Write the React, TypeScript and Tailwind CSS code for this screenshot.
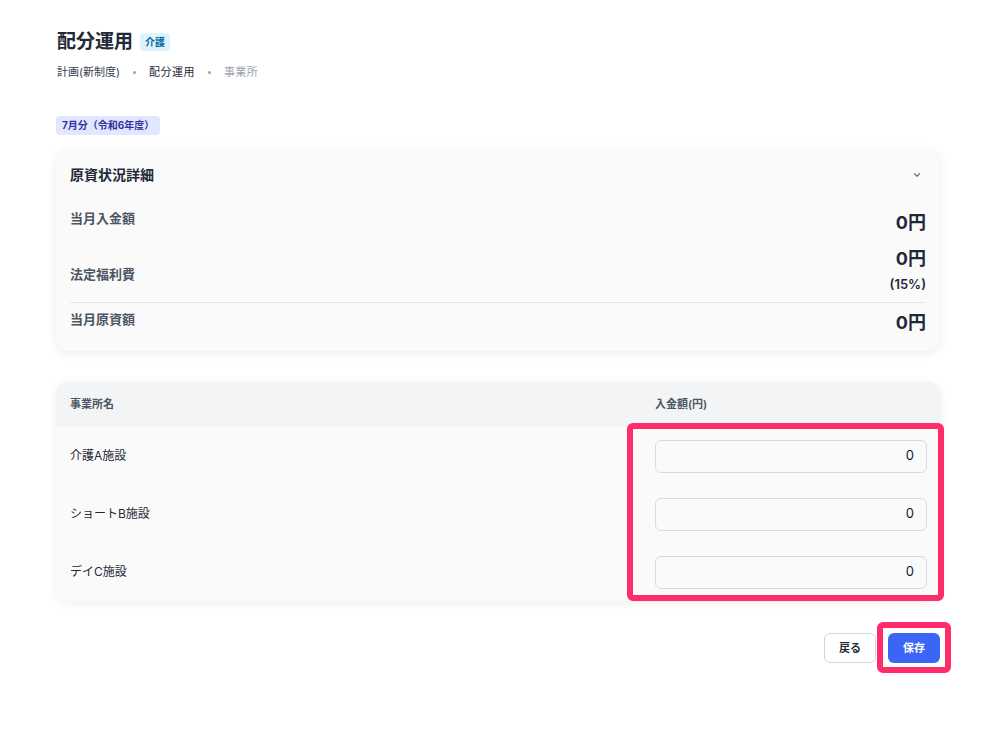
import React from "react";

const font = { fontFamily: "Inter, 'Noto Sans CJK JP', sans-serif" };

function Chevron() {
  return (
    <svg width="10" height="10" viewBox="0 0 24 24" fill="none" stroke="#6b7280" strokeWidth="3" strokeLinecap="round" strokeLinejoin="round">
      <path d="M6 9l6 6 6-6" />
    </svg>
  );
}

function Dot() {
  return <span className="w-[3px] h-[3px] rounded-full bg-[#9ca3af] mx-[13px]" />;
}

const rows = ["介護A施設", "ショートB施設", "デイC施設"];

export default function App() {
  return (
    <div className="min-h-[743px] bg-white text-[#1f2937]" style={font}>
      <div className="relative pl-[56px] pr-[52px] pt-[30px] pb-10">
        <div className="flex items-center">
          <h1 className="text-[19px] leading-6 font-bold text-[#1f2937] ml-px">配分運用</h1>
          <span className="ml-[7px] px-[5px] h-[18px] flex items-center rounded bg-[#e0f2fe] text-[#0369a1] text-[10px] font-bold">介護</span>
        </div>
        <nav className="mt-[10px] flex items-center text-[11px] leading-4 ml-px">
          <span className="text-[#374151]">計画(新制度)</span>
          <Dot />
          <span className="text-[#1f2937] tracking-[0.5px]">配分運用</span>
          <Dot />
          <span className="text-[#9ca3af] tracking-[0.3px]">事業所</span>
        </nav>

        <div className="mt-[36px] flex">
          <span className="h-[19px] px-[6px] flex items-center rounded bg-[#e0e7ff] text-[#3730a3] text-[10px] font-bold">7月分（令和6年度）</span>
        </div>

        <section className="mt-[14px] w-[884px] rounded-xl bg-[#fafafa] shadow-[0_2px_10px_rgba(0,0,0,0.08)] px-[14px] pt-[16px] pb-[14px]">
          <div className="flex items-center justify-between h-5">
            <h2 className="text-[14px] font-bold leading-5 text-[#1f2937]">原資状況詳細</h2>
            <span className="mr-[4px] flex items-center"><Chevron /></span>
          </div>
          <div className="mt-[23px] flex justify-between items-start">
            <span className="text-[13px] leading-5 font-semibold text-[#4b5563]">当月入金額</span>
            <span className="text-[18px] leading-7 font-bold text-[#1f2937] mt-px">0円</span>
          </div>
          <div className="mt-[8px] flex justify-between items-start">
            <span className="text-[13px] leading-5 font-semibold text-[#4b5563] pt-[19px]">法定福利費</span>
            <div className="flex flex-col items-end">
              <span className="text-[18px] leading-7 font-bold text-[#1f2937]">0円</span>
              <span className="text-[13px] leading-4 font-semibold text-[#1f2937] mt-[3px]">(15%)</span>
            </div>
          </div>
          <div className="mt-[10px] border-t border-[#e5e7eb]" />
          <div className="mt-[6px] flex justify-between items-start">
            <span className="text-[13px] leading-5 font-semibold text-[#4b5563]">当月原資額</span>
            <span className="text-[18px] leading-7 font-bold text-[#1f2937]">0円</span>
          </div>
        </section>

        <section className="mt-[31px] w-[884px] rounded-xl bg-[#fafafa] shadow-[0_2px_10px_rgba(0,0,0,0.07)] overflow-hidden">
          <div className="flex h-[45px] items-center bg-[#f3f4f6] text-[11px] font-semibold text-[#4b5563]">
            <div className="w-[585px] pl-[14px]">事業所名</div>
            <div className="flex-1 pl-[14px]">入金額(円)</div>
          </div>
          {rows.map((r) => (
            <div key={r} className="flex h-[58px] items-center text-[12px] text-[#1f2937]">
              <div className="w-[585px] pl-[14px]">{r}</div>
              <div className="flex-1 pl-[14px] pr-[13px]">
                <div className="h-[33px] rounded-md border border-[#d9dbe0] bg-[#fafafa] flex items-center justify-end pr-[12px] text-[13px] text-[#111827]">0</div>
              </div>
            </div>
          ))}
        </section>

        <div className="mt-[32px] w-[884px] flex justify-end gap-[12px]">
          <button className="h-[30px] w-[52px] rounded-md border border-[#d1d5db] bg-white text-[11px] font-bold text-[#1f2937]">戻る</button>
          <button className="h-[30px] w-[52px] rounded-md bg-[#3b65f5] text-[11px] font-bold text-white">保存</button>
        </div>

        <div className="absolute left-[627px] top-[423px] w-[317px] h-[178px] border-[6px] border-[#fe2c6b] rounded-[6px] pointer-events-none" />
        <div className="absolute left-[877px] top-[622px] w-[74px] h-[51px] border-[6px] border-[#fe2c6b] rounded-[6px] pointer-events-none" />
      </div>
    </div>
  );
}
